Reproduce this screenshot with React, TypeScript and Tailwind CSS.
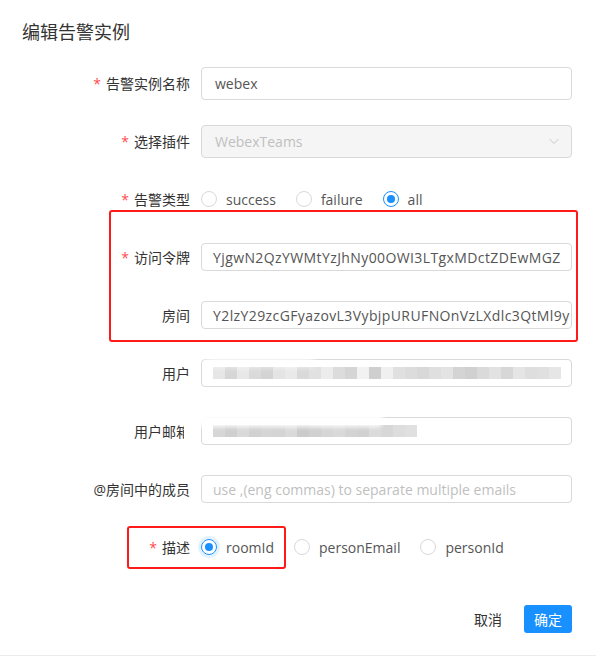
import React from "react";

const font = "font-['Open_Sans','Noto_Sans_CJK_SC',sans-serif]";

const Label: React.FC<{ text: string; required?: boolean }> = ({ text, required }) => (
    <div className="w-[201px] shrink-0 pr-[11px] text-right text-[14px] text-[#333]">
        {required && <span className="mr-[5px] text-[#ff4d4f]">*</span>}
        {text}
    </div>
);

const Radio: React.FC<{ label: string; checked?: boolean; glow?: boolean }> = ({ label, checked, glow }) => (
    <label className="mr-[20px] flex items-center">
        <span
            className={
                checked
                    ? glow
                        ? "flex h-[16px] w-[16px] items-center justify-center rounded-full border border-[#1890ff] shadow-[0_0_0_3px_rgba(24,144,255,0.12)]"
                        : "flex h-[16px] w-[16px] items-center justify-center rounded-full border border-[#1890ff]"
                    : "h-[16px] w-[16px] rounded-full border border-[#d9d9d9]"
            }
        >
            {checked && <span className="h-[8px] w-[8px] rounded-full bg-[#1890ff]" />}
        </span>
        <span className="ml-[9px] text-[14px] text-[#555]">{label}</span>
    </label>
);

// pixelated blur blocks
const userBlocks = ["#e6e6e6", "#d6d6d6", "#e8e8e8", "#dadada", "#d3d3d3", "#e4e4e4", "#e9e9e9", "#d9d9d9", "#e1e1e1", "#ececec", "#dcdcdc", "#d5d5d5", "#f2f2f2", "#cfcfcf", "#f0f0f0", "#e0e0e0", "#dcdcdc", "#d8d8d8", "#dfdfdf", "#e3e3e3", "#d4d4d4", "#d0d0d0", "#dadada", "#e2e2e2", "#d7d7d7", "#e5e5e5", "#dedede", "#e0e0e0", "#e6e6e6"];
const mailBlocks = ["#d6d6d6", "#cfcfcf", "#d9d9d9", "#d1d1d1", "#d5d5d5", "#d4d4d4", "#dadada", "#cbcbcb", "#d0d0d0", "#d6d6d6", "#d9d9d9", "#d3d3d3", "#d1d1d1", "#dbdbdb", "#d7d7d7", "#dddddd", "#e0e0e0"];

export default function App() {
    return (
        <div className={`relative h-[657px] w-[596px] overflow-hidden bg-white ${font}`}>
            {/* Title */}
            <div className="h-[54px] pl-[22px] pt-[20px] text-[18px] leading-[24px] text-[#333]">编辑告警实例</div>

            {/* Form */}
            <div className="flex flex-col">
                <div className="flex h-[58px] items-center">
                    <Label text="告警实例名称" required />
                    <div className="flex h-[33px] w-[371px] items-center rounded-[4px] border border-[#d9d9d9] px-[13px] text-[14px] text-[#555]">
                        webex
                    </div>
                </div>

                <div className="flex h-[58px] items-center">
                    <Label text="选择插件" required />
                    <div className="flex h-[33px] w-[371px] items-center justify-between rounded-[4px] border border-[#d9d9d9] bg-[#f5f5f5] pl-[13px] pr-[11px] text-[14px] text-[#bfbfbf]">
                        WebexTeams
                        <svg width="12" height="12" viewBox="0 0 12 12" fill="none">
                            <path d="M1.5 4 L6 8.5 L10.5 4" stroke="#c8c8c8" strokeWidth="1" />
                        </svg>
                    </div>
                </div>

                <div className="flex h-[58px] items-center">
                    <Label text="告警类型" required />
                    <Radio label="success" />
                    <Radio label="failure" />
                    <Radio label="all" checked />
                </div>

                <div className="flex h-[58px] items-center">
                    <Label text="访问令牌" required />
                    <div className="flex h-[28px] w-[371px] items-center overflow-hidden whitespace-nowrap rounded-[4px] border border-[#d9d9d9] px-[11px] text-[14px] tracking-[0.4px] text-[#555]">
                        YjgwN2QzYWMtYzJhNy00OWI3LTgxMDctZDEwMGZ
                    </div>
                </div>

                <div className="flex h-[58px] items-center">
                    <Label text="房间" />
                    <div className="flex h-[28px] w-[371px] items-center overflow-hidden whitespace-nowrap rounded-[4px] border border-[#d9d9d9] pl-[11px] text-[14px] tracking-[0.4px] text-[#555]">
                        Y2lzY29zcGFyazovL3VybjpURUFNOnVzLXdlc3QtMl9y
                    </div>
                </div>

                <div className="flex h-[58px] items-center">
                    <Label text="用户" />
                    <div className="flex h-[28px] w-[371px] items-center overflow-hidden rounded-[4px] border border-[#d9d9d9] pl-[11px]">
                        {userBlocks.map((c, i) => (
                            <span key={i} className="h-[12px] w-[12px] shrink-0" style={{ background: c }} />
                        ))}
                    </div>
                </div>

                <div className="flex h-[58px] items-center">
                    <Label text="用户邮箱" />
                    <div className="flex h-[28px] w-[371px] items-center overflow-hidden rounded-[4px] border border-[#d9d9d9] pl-[11px]">
                        {mailBlocks.map((c, i) => (
                            <span key={i} className="h-[12px] w-[12px] shrink-0" style={{ background: c }} />
                        ))}
                    </div>
                </div>

                <div className="flex h-[58px] items-center">
                    <Label text="@房间中的成员" />
                    <div className="flex h-[28px] w-[371px] items-center overflow-hidden whitespace-nowrap rounded-[4px] border border-[#d9d9d9] px-[11px] text-[14px] text-[#bfbfbf]">
                        use ,(eng commas) to separate multiple emails
                    </div>
                </div>

                <div className="flex h-[58px] items-center">
                    <Label text="描述" required />
                    <Radio label="roomId" checked glow />
                    <Radio label="personEmail" />
                    <Radio label="personId" />
                </div>
            </div>

            {/* Footer */}
            <div className="mt-[29px] flex items-center justify-end pr-[24px]">
                <button className="mr-[22px] text-[14px] text-[#333]">取消</button>
                <button className="h-[28px] w-[48px] rounded-[3px] bg-[#1890ff] text-[14px] text-white">确定</button>
            </div>

            <div className="absolute bottom-[1px] left-0 h-[1px] w-full bg-[#ebebf0]" />

            {/* Annotation boxes */}
            <div className="pointer-events-none absolute left-[109px] top-[210px] h-[132px] w-[469px] rounded-[3px] border-2 border-[#ff1a1a]" />
            <div className="pointer-events-none absolute left-[127px] top-[526px] h-[43px] w-[159px] rounded-[3px] border-2 border-[#ff1a1a]" />

            {/* blur smudges */}
            <div className="pointer-events-none absolute left-[205px] top-[355px] h-[12px] w-[110px] rounded-full bg-white/70 blur-[3px]" />
            <div className="pointer-events-none absolute left-[184px] top-[413px] h-[14px] w-[200px] rounded-full bg-white/90 blur-[2px]" />
            <div className="pointer-events-none absolute left-[184px] top-[420px] h-[24px] w-[10px] bg-white" />
        </div>
    );
}
